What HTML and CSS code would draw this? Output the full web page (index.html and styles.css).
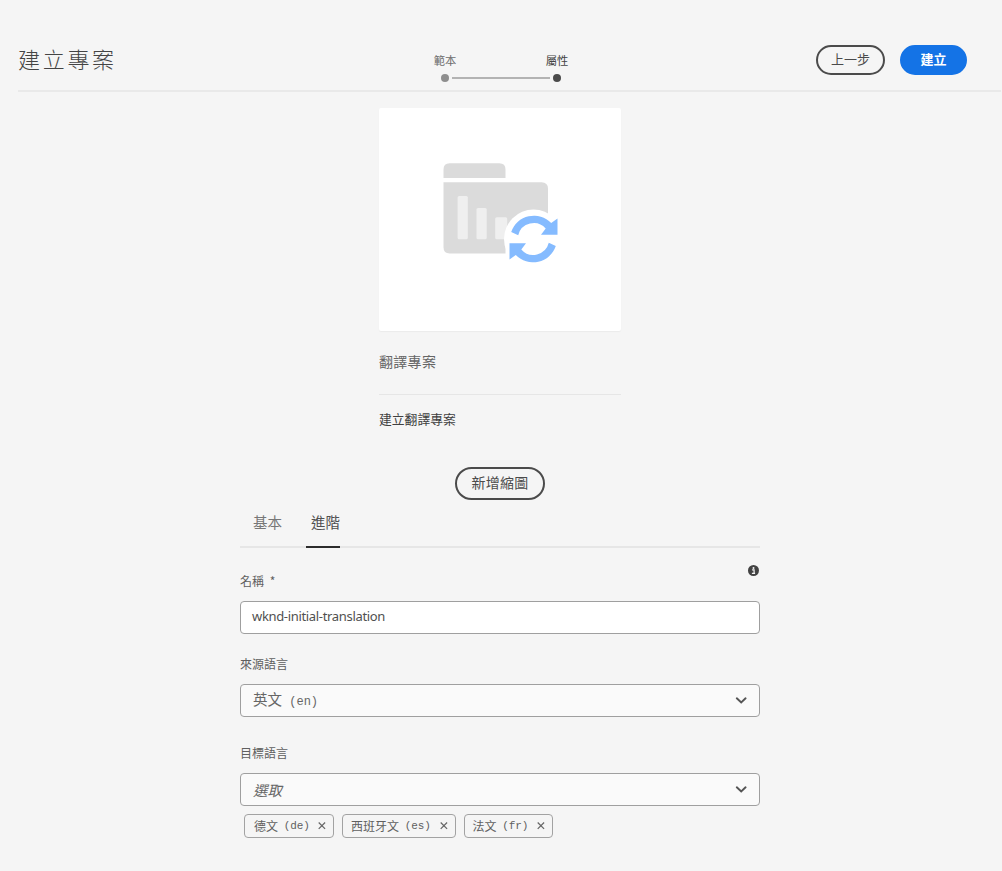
FILE: index.html
```html
<!DOCTYPE html>
<html lang="zh-Hant">
<head>
<meta charset="utf-8">
<title>建立專案</title>
<link rel="stylesheet" href="styles.css">
</head>
<body>
<header class="header">
  <h1 class="title">建立專案</h1>
  <ol class="steps">
    <li class="step">範本<span class="dot"></span></li>
    <li class="track"></li>
    <li class="step step-active">屬性<span class="dot"></span></li>
  </ol>
  <div class="actions">
    <button class="button button-back">上一步</button>
    <button class="button button-create">建立</button>
  </div>
</header>
<main class="content">
  <section class="preview">
    <div class="card">
      <svg class="card-icon" width="116" height="102" viewBox="443 162 116 102">
        <path fill="#dbdbdb" d="M443.500 178v-8.500q0-6.200 6.200-6.200h49.600q6.200 0 6.200 6.200v8.500zM443.500 182.300h98q6.500 0 6.500 6.500v64.700h-98.300q-6.200 0-6.200-6.200z"/>
        <g fill="#efefef">
          <rect x="457.600" y="196" width="10.200" height="43.300" rx="1.500"/>
          <rect x="476.500" y="208" width="10.200" height="31.300" rx="1.500"/>
          <rect x="495.200" y="217.300" width="12" height="22" rx="1.500"/>
        </g>
        <path fill="#fff" d="M505.500 239h45v18h-45z"/>
        <circle cx="533.500" cy="239" r="29.500" fill="#fff"/>
        <g fill="#85bbff">
          <path d="M511.200 232A24 24 0 0 1 551.200 223L557.500 218.600V234.800H541L545.700 228.600A16 16 0 0 0 518.200 235.200z"/>
          <path transform="rotate(180 533.500 239)" d="M511.200 232A24 24 0 0 1 551.200 223L557.500 218.600V234.800H541L545.700 228.600A16 16 0 0 0 518.200 235.200z"/>
        </g>
      </svg>
    </div>
    <h2 class="card-title">翻譯專案</h2>
    <p class="card-text">建立翻譯專案</p>
    <button class="button button-thumb">新增縮圖</button>
  </section>
  <section class="form">
    <nav class="tabs">
      <a class="tab">基本</a>
      <a class="tab tab-active">進階</a>
    </nav>
    <div class="label-row">
      <label class="label">名稱 <span class="star">*</span></label>
      <svg class="info" width="12" height="12" viewBox="0 0 12 12"><circle cx="5.500" cy="5.500" r="5.500" fill="#424242"/><circle cx="5.500" cy="2.900" r="1" fill="#f5f5f5"/><path d="M4.100 4.900h2v3.200M3.900 8.400h3.200" fill="none" stroke="#f5f5f5" stroke-width="1.200"/></svg>
    </div>
    <div class="field field-text">wknd-initial-translation</div>
    <label class="label label-source">來源語言</label>
    <div class="field field-select"><span>英文 <span class="code">(en)</span></span>
      <svg width="12" height="8" viewBox="0 0 12 8"><path class="chevron" d="M1.800 1.300 6.200 5.500l4.400-4.200"/></svg>
    </div>
    <label class="label label-target">目標語言</label>
    <div class="field field-select"><em>選取</em>
      <svg width="12" height="8" viewBox="0 0 12 8"><path class="chevron" d="M1.800 1.300 6.200 5.500l4.400-4.200"/></svg>
    </div>
    <div class="tags">
      <span class="tag">德文 <span class="code">(de)</span><svg width="8" height="8" viewBox="0 0 8 8"><path class="cross" d="M.7.5l6.400 6.400M7.100.5.700 6.900"/></svg></span>
      <span class="tag tag-wide">西班牙文 <span class="code">(es)</span><svg width="8" height="8" viewBox="0 0 8 8"><path class="cross" d="M.7.5l6.400 6.400M7.100.5.700 6.900"/></svg></span>
      <span class="tag">法文 <span class="code">(fr)</span><svg width="8" height="8" viewBox="0 0 8 8"><path class="cross" d="M.7.5l6.400 6.400M7.100.5.700 6.900"/></svg></span>
    </div>
  </section>
</main>
</body>
</html>
```
FILE: styles.css
```css
* { box-sizing: border-box; }

body {
  margin: 0;
  height: 871px;
  overflow: hidden;
  background: #f5f5f5;
  color: #505050;
  font: 12px/18px "Noto Sans CJK TC", sans-serif;
}

.header {
  display: grid;
  grid-template-columns: 415px 136px 1fr;
  height: 92px;
  margin: 0 1px 0 18px;
  padding-top: 45px;
  border-bottom: 2px solid #e9e9e9;
}

.title {
  margin: 0;
  font-size: 22px;
  line-height: 26px;
  font-weight: 300;
  letter-spacing: 2.700px;
  color: #444;
}

.steps {
  display: flex;
  justify-content: space-between;
  margin: 0;
  padding: 6px 0 0;
  list-style: none;
}

.step {
  display: flex;
  flex-direction: column;
  align-items: center;
  width: 24px;
  font-size: 11.300px;
  white-space: nowrap;
  color: #6e6e6e;
}

.step-active { color: #444; }

.dot {
  width: 8px;
  height: 8px;
  margin-top: 5px;
  border-radius: 50%;
  background: #8e8e8e;
}

.step-active .dot { background: #4b4b4b; }

.track {
  flex: none;
  width: 98px;
  height: 2px;
  margin: 26px -5px 0;
  background: #b3b3b3;
}

.actions {
  display: flex;
  justify-content: flex-end;
  gap: 15px;
  padding-right: 34px;
}

.button {
  height: 30px;
  padding: 0 0 2px;
  border: 2px solid #4b4b4b;
  border-radius: 16px;
  background: transparent;
  color: #4b4b4b;
  font: 13px/20px "Noto Sans CJK TC", sans-serif;
}

.button-back { width: 69px; }

.button-create {
  width: 67px;
  border-color: #1473e6;
  background: #1473e6;
  color: #fff;
  font-weight: 700;
}

.content {
  display: flex;
  flex-direction: column;
  align-items: center;
  padding: 16px 2px 0 0;
}

.preview {
  display: flex;
  flex-direction: column;
  width: 242px;
}

.card {
  height: 223px;
  padding: 54px 0 0 64px;
  border-radius: 2px;
  background: #fff;
  box-shadow: 0 1px 1px #ebebeb;
}

.card-icon { display: block; }

.card-title {
  height: 64px;
  margin: 0;
  padding-top: 20px;
  border-bottom: 1px solid #e6e6e6;
  font-size: 14px;
  line-height: 20px;
  font-weight: 400;
  letter-spacing: .3px;
  color: #666;
}

.card-text {
  margin: 0;
  padding-top: 15px;
  font-size: 12.800px;
  line-height: 18px;
  color: #404040;
}

.button-thumb {
  align-self: center;
  width: 90px;
  height: 33px;
  margin-top: 39px;
  padding-bottom: 4px;
  border-radius: 17px;
  font-size: 14px;
  letter-spacing: .3px;
}

.form { width: 520px; }

.tabs {
  display: flex;
  gap: 12px;
  height: 48px;
  padding-left: 4px;
  border-bottom: 2px solid #e6e6e6;
}

.tab {
  width: 50px;
  height: 48px;
  padding: 12px 9px 0;
  font-size: 14.500px;
  line-height: 20px;
  color: #777;
}

.tab-active {
  width: 34px;
  padding: 12px 0 0 5px;
  white-space: nowrap;
  border-bottom: 2px solid #2c2c2c;
  color: #505050;
}

.label-row {
  display: flex;
  justify-content: space-between;
  height: 53px;
  padding-top: 17px;
}

.label {
  display: block;
  color: #606060;
}

.label-row .label { padding-top: 7px; }
.star { margin-left: 3px; }
.info { display: block; }

.field {
  display: flex;
  align-items: center;
  height: 33px;
  padding: 0 12px;
  border: 1px solid #9f9f9f;
  border-radius: 4px;
  background: #fafafa;
  color: #666;
  font-size: 14.500px;
}

.field-text {
  padding: 0 11px 3px;
  background: #fff;
  color: #505050;
  font: 13px "Noto Sans", sans-serif;
  letter-spacing: -.33px;
}

.field-select { justify-content: space-between; }

.chevron {
  fill: none;
  stroke: #555;
  stroke-width: 1.900;
  stroke-linecap: round;
}

.code {
  margin-left: 4px;
  font-family: "Liberation Mono", monospace;
  font-size: 12px;
}

.tag .code {
  margin-left: 3px;
  font-size: 11px;
  letter-spacing: -.1px;
}

.label-source {
  height: 50px;
  padding-top: 21px;
}

.label-target {
  height: 56px;
  padding-top: 27px;
}

.tags {
  display: flex;
  gap: 8px;
  padding: 8px 0 0 4px;
}

.tag {
  display: flex;
  align-items: center;
  width: 90px;
  height: 24px;
  padding-left: 9px;
  border: 1px solid #a2a2a2;
  border-radius: 4px;
  white-space: pre;
  color: #606060;
}

.tag-wide {
  width: 113.500px;
  padding-left: 8px;
}

.tag:last-child {
  width: 89.500px;
  padding-left: 8px;
}

.tag svg { margin: 0 7px 0 auto; }

.cross {
  stroke: #666;
  stroke-width: 1.200;
}
```
